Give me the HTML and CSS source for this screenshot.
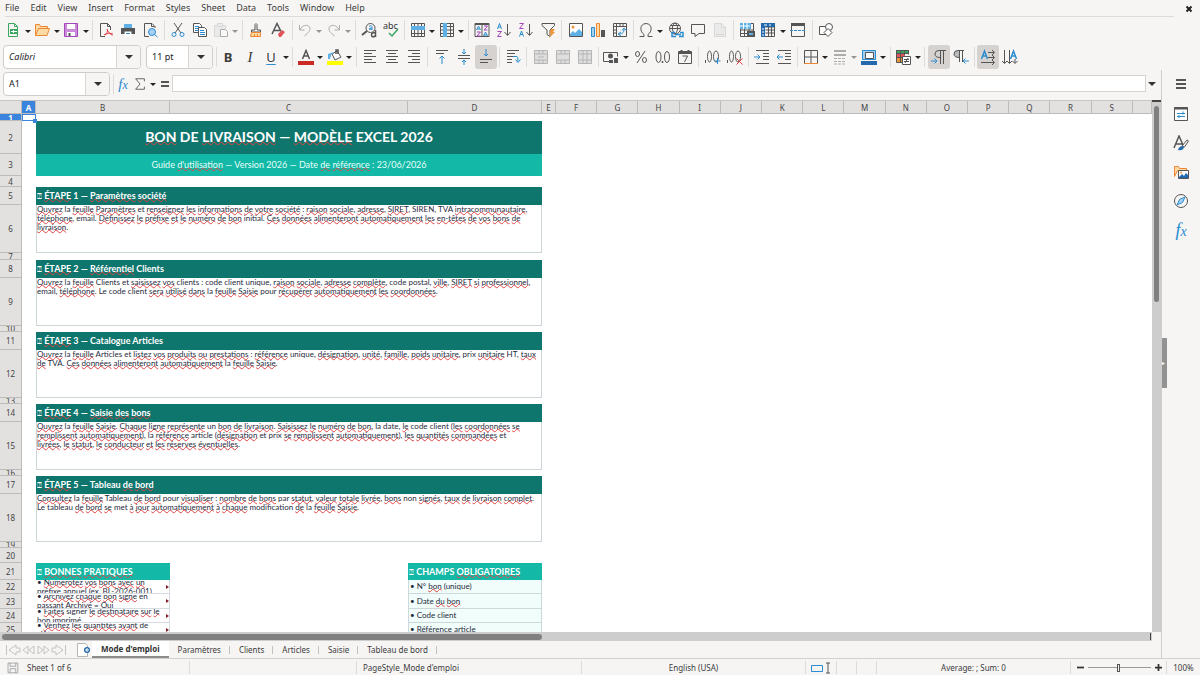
FILE: index.html
```html
<!DOCTYPE html>
<html lang="fr">
<head>
<meta charset="utf-8">
<title>Bon de livraison</title>
<link rel="stylesheet" href="styles.css">
</head>
<body>
<div class="app">
<header class="menubar">
  <nav class="menus">
    <button>File</button><button>Edit</button><button>View</button><button>Insert</button><button>Format</button><button>Styles</button><button>Sheet</button><button>Data</button><button>Tools</button><button>Window</button><button>Help</button>
  </nav>
  <button class="close" aria-label="Close"><svg viewBox="0 0 8 8"><path d="M1.500 1.500l5 5M6.500 1.500l-5 5"/></svg></button>
</header>

<div class="bar bar-main">
  <div class="tools standard">
    <div class="group">
      <button class="split" aria-label="New"><svg viewBox="0 0 16 16"><path class="green" d="M3.500 1.500h6l3 3v10h-9z"/><path class="green" d="M9.500 1.500v3h3"/><path class="fgreen" d="M5 7h8v5H5z"/><path class="white" d="M6 9.500h6M8.500 8v3"/></svg></button><button class="drop" aria-label="New options"></button>
      <button class="split" aria-label="Open"><svg viewBox="0 0 16 16"><path class="orange lightorange" d="M1.500 13.500v-11h4l1 2h7v3"/><path class="orange lightorange" d="M1.500 13.500l3-7h11l-2.500 7z"/></svg></button><button class="drop" aria-label="Open options"></button>
      <button class="split" aria-label="Save"><svg viewBox="0 0 16 16"><path class="purple fpurple" d="M1.500 1.500h13v13h-13z"/><path class="fwhite" d="M4 2h8v5H4zM4 10h8v4H4z"/><path class="fdark" d="M5.500 11h2v3h-2z"/></svg></button><button class="drop" aria-label="Save options"></button>
    </div>
    <i class="sep"></i>
    <div class="group">
      <button aria-label="Export PDF"><svg viewBox="0 0 16 16"><path d="M7 14.500H2.500v-13h7l3 3V8M9.500 1.500v3h3"/><path class="red" d="M6 13c3-1 4-4 3.500-5.500S8 9 14.500 13.500M7 13c2-2 5-2 8-1"/></svg></button>
      <button aria-label="Print"><svg viewBox="0 0 16 16"><path class="fblue" d="M4 2h8v4H4z"/><path class="fdark" d="M1 6h14v6H1z"/><path class="fwhite" d="M4.500 9.500h7v5h-7z"/><path class="blue" d="M6 11.500h4"/></svg></button>
      <button aria-label="Print preview"><svg viewBox="0 0 16 16"><path d="M13 6V4.500l-3-3H2.500v13H7M9.500 1.500v3h3"/><circle class="blue lightblue" cx="10" cy="10" r="3.500"/><path class="blue" d="M12.500 12.500l3 2.500"/></svg></button>
    </div>
    <i class="sep"></i>
    <div class="group">
      <button aria-label="Cut"><svg viewBox="0 0 16 16"><path d="M4 1l7 10M12 1L5 11"/><circle class="blue" cx="4" cy="12.500" r="2"/><circle class="blue" cx="12" cy="12.500" r="2"/></svg></button>
      <button aria-label="Copy"><svg viewBox="0 0 16 16"><path class="fwhite line" d="M1.500 1.500h6l2 2v7h-8z"/><path class="blue" d="M3 4.500h4M3 6.500h3M3 8.500h3"/><path class="fwhite line" d="M6.500 5.500h6l2 2v7h-8z"/><path class="blue" d="M8 8.500h4M8 10.500h5M8 12.500h5"/></svg></button>
      <button class="split off" aria-label="Paste"><svg viewBox="0 0 16 16"><path class="pale" d="M1.500 3.500h11v11h-11z"/><path class="pale" d="M4.500 1.500h5v3h-5z"/><path class="fwhite line" d="M7.500 7.500h5l2 2v5h-7z"/></svg></button><button class="drop off" aria-label="Paste options"></button>
    </div>
    <i class="sep"></i>
    <div class="group">
      <button aria-label="Clone formatting"><svg viewBox="0 0 16 16"><path d="M7 8V2.500q1-2 2 0V8h3.500v2h-9V8z"/><path class="orange lightorange" d="M3.500 10.500h9v4h-10zM6.500 12v2M9.500 12v2"/></svg></button>
      <button aria-label="Clear formatting"><svg viewBox="0 0 16 16"><path class="medium" d="M2 12L7 1.500l4 8M4 8.500h6"/><path class="fred" d="M8 12l4-4 3 2-4 5H9z"/></svg></button>
    </div>
    <i class="sep"></i>
    <div class="group">
      <button class="split off" aria-label="Undo"><svg viewBox="0 0 16 16"><path d="M2.500 3v5h5M3 7.500C6 2 13 2 13 7c0 2-1 3-5.500 7"/></svg></button><button class="drop off" aria-label="Undo options"></button>
      <button class="split off" aria-label="Redo"><svg viewBox="0 0 16 16"><path d="M13.500 3v5h-5M13 7.500C10 2 3 2 3 7c0 2 1 3 5.500 7"/></svg></button><button class="drop off" aria-label="Redo options"></button>
    </div>
    <i class="sep"></i>
    <div class="group">
      <button aria-label="Find and replace"><svg viewBox="0 0 16 16"><circle cx="9.500" cy="6" r="4.500"/><path class="thick" d="M6 9l-5 4"/><path class="blue" d="M8 4.500q3-2 3 1v2.500M11 6q-3 0-3 1t3 0"/><path class="medium" d="M14.500 8v7M14.500 11q-4-1-4 2t4 1"/></svg></button>
      <button aria-label="Spelling"><svg viewBox="0 0 16 16"><text class="abc" x="0" y="7">abc</text><path class="green medium" d="M6 11l3 3 6-7"/></svg></button>
    </div>
    <i class="sep"></i>
    <div class="group">
      <button class="split" aria-label="Row"><svg viewBox="0 0 16 16"><path d="M1.500 1.500h13v13h-13zM1.500 11.500h13M4.500 1.500v13M8 1.500v13M11.500 1.500v13"/><path class="fblue" d="M1 4h14v4H1z"/></svg></button><button class="drop" aria-label="Row options"></button>
      <button class="split" aria-label="Column"><svg viewBox="0 0 16 16"><path d="M1.500 1.500h13v13h-13zM11.500 1.500v13M1.500 4.500h13M1.500 8h13M1.500 11.500h13"/><path class="fblue" d="M4 1h4v14H4z"/></svg></button><button class="drop" aria-label="Column options"></button>
    </div>
    <i class="sep"></i>
    <div class="group">
      <button aria-label="Sort"><svg viewBox="0 0 16 16"><path d="M1 1.500h14v13H1zM8 1.500v13"/><path class="thick" d="M1 2h14"/><path class="blue" d="M2.500 8l2-4 2 4M3 7h3M9.500 14l2-4 2 4M10 13h3"/><path class="purple" d="M3 10h3.500L3 14h3.500M10 4h3.500L10 8h3.500"/></svg></button>
      <button aria-label="Sort ascending"><svg viewBox="0 0 16 16"><path class="blue" d="M1.500 7l2-5.500 2 5.500M2 5h3"/><path class="purple" d="M1.500 9.500h4l-4 5h4"/><path d="M11.500 2v11M8.500 10l3 3.500 3-3.500"/></svg></button>
      <button aria-label="Sort descending"><svg viewBox="0 0 16 16"><path class="purple" d="M1.500 1.500h4l-4 5h4"/><path class="blue" d="M1.500 14.500l2-5.500 2 5.500M2 12.500h3"/><path d="M11.500 2v11M8.500 10l3 3.500 3-3.500"/></svg></button>
      <button aria-label="AutoFilter"><svg viewBox="0 0 16 16"><path d="M2 1.500h12.500v2L10 8v6.500l-3-2V8L2 3.500z"/><path class="forange" d="M11 7h4l-2 3h2l-6 6 2-5H9z"/></svg></button>
    </div>
    <i class="sep"></i>
    <div class="group">
      <button aria-label="Image"><svg viewBox="0 0 16 16"><path class="fwhite line" d="M1.500 1.500h13v13h-13z"/><circle class="forange" cx="5" cy="5" r="1.500"/><path class="fblue" d="M2 12l3-3 2 2 4-4 3 3v4H2z"/></svg></button>
      <button aria-label="Chart"><svg viewBox="0 0 16 16"><path class="blue lightblue" d="M1.500 5.500h3v9h-3z"/><path class="orange lightorange" d="M6.500 1.500h3v13h-3z"/><path class="fdark" d="M11 8h4v7h-4z"/></svg></button>
      <button aria-label="Pivot table"><svg viewBox="0 0 16 16"><path d="M1.500 1.500h13v13h-13zM1.500 4.500h13M4.500 1.500v13M8 1.500v3M11 1.500v3M1.500 8h3M1.500 11h3"/><path class="blue" d="M7 12c4 0 5-2 5-5M10 8.500L12 6l2 2.500M9 10l-3 2 3 2"/></svg></button>
    </div>
    <i class="sep"></i>
    <div class="group">
      <button class="split" aria-label="Special character"><svg viewBox="0 0 16 16"><path d="M1.500 14.500h4.500v-2C2 10 1 2 8 1.500c7 .5 6 8.500 2 11v2h4.500"/></svg></button><button class="drop" aria-label="Character options"></button>
      <button aria-label="Hyperlink"><svg viewBox="0 0 16 16"><circle cx="7" cy="6.500" r="5.500"/><path d="M1.500 6.500h11M2.500 3.500h9M7 1c-4 3-3 8 0 11M7 1c4 3 3 8 0 11"/><path class="blue medium" d="M7 10.500H4v4h4M12 10.500h3v4h-4M7 12.500h6"/></svg></button>
      <button aria-label="Comment"><svg viewBox="0 0 16 16"><path d="M1.500 2.500h13v9H9l-4 3v-3H1.500z"/></svg></button>
      <button class="off" aria-label="Headers and footers"><svg viewBox="0 0 16 16"><path class="pale" d="M2.500 1.500h7l4 4v9h-11zM9.500 1.500v4h4M4 12.500h8"/></svg></button>
    </div>
    <i class="sep"></i>
    <div class="group">
      <button aria-label="Print area"><svg viewBox="0 0 16 16"><path d="M1.500 1.500h13v13h-13zM1.500 11.500h13M5.500 1.500v13M10 1.500v13M1.500 8h13"/><path class="fblue" d="M1 1h11v6H1z"/><path class="white" d="M1 4h10M4.500 1v6M8 1v6"/><path class="fdark" d="M8 9h8v6H8z"/><path class="fblue" d="M10 11h4v2h-4z"/></svg></button>
      <button class="split" aria-label="Freeze"><svg viewBox="0 0 16 16"><path d="M1.500 1.500h13v13h-13zM5.500 5h9M5.500 8h9M5.500 11h9M8.500 4v11M11.500 4v11"/><path class="fdeep" d="M1 1h14v4H5v10H1z"/><path class="white" d="M2 7h2M2 10h2M2 13h2M4 3h3M9 3h2"/></svg></button><button class="drop" aria-label="Freeze options"></button>
      <button aria-label="Split window"><svg viewBox="0 0 16 16"><path d="M1.500 1.500h13v13h-13z"/><path class="fdark" d="M1 1h14v3H1z"/><path class="blue dash" d="M0 8.500h16"/></svg></button>
    </div>
    <i class="sep"></i>
    <div class="group">
      <button aria-label="Draw functions"><svg viewBox="0 0 16 16"><path class="fwhite line" d="M1.500 4.500h8v8h-8z"/><circle class="fwhite line" cx="11" cy="5" r="3.500"/><path class="fwhite line" d="M10 6.500l4 4-4 4-4-4z"/></svg></button>
    </div>
  </div>
</div>

<div class="bar bar-format">
  <div class="combo font"><input type="text" value="Calibri" aria-label="Font name"><button aria-label="Font list"></button></div>
  <div class="combo size"><input type="text" value="11 pt" aria-label="Font size"><button aria-label="Size list"></button></div>
  <i class="sep"></i>
  <div class="tools formatting">
    <div class="group">
      <button class="glyph strong">B</button><button class="glyph ital">I</button><button class="glyph under split">U</button><button class="drop" aria-label="Underline options"></button>
    </div>
    <i class="sep"></i>
    <div class="group">
      <button class="split" aria-label="Font color"><svg viewBox="0 0 16 16"><path class="medium" d="M4.500 10L8 1.500 11.500 10M5.500 7h5"/><path class="fstrong" d="M0 12h16v4H0z"/></svg></button><button class="drop" aria-label="Font color options"></button>
      <button class="split" aria-label="Highlighting"><svg viewBox="0 0 16 16"><path class="fwhite line" d="M5 5l5-3 4 6-6 3z"/><path class="medium" d="M9 5V1h2v4"/><path class="fblue" d="M1 10V5l6-2-3 3-1 4z"/><path class="fyellow" d="M0 12h16v4H0z"/></svg></button><button class="drop" aria-label="Highlighting options"></button>
    </div>
    <i class="sep"></i>
    <div class="group">
      <button aria-label="Align left"><svg viewBox="0 0 16 16"><path d="M2 1.500h12M2 4.500h8M2 7.500h12M2 10.500h8M2 13.500h12"/></svg></button>
      <button aria-label="Center"><svg viewBox="0 0 16 16"><path d="M2 1.500h12M4 4.500h8M2 7.500h12M4 10.500h8M2 13.500h12"/></svg></button>
      <button aria-label="Align right"><svg viewBox="0 0 16 16"><path d="M2 1.500h12M6 4.500h8M2 7.500h12M6 10.500h8M2 13.500h12"/></svg></button>
    </div>
    <i class="sep"></i>
    <div class="group">
      <button aria-label="Align top"><svg viewBox="0 0 16 16"><path d="M2 1.500h12M2 4.500h8"/><path class="blue" d="M8 15V7M5.500 9.500L8 7l2.500 2.500"/></svg></button>
      <button aria-label="Center vertically"><svg viewBox="0 0 16 16"><path d="M2 6.500h12M2 9.500h12"/><path class="blue" d="M8 0v5M6 3l2 2 2-2M8 16v-5M6 13l2-2 2 2"/></svg></button>
      <button class="on" aria-label="Align bottom"><svg viewBox="0 0 16 16"><path d="M2 10.500h12M2 13.500h8"/><path class="blue" d="M8 0v7M6 5l2 2 2-2"/></svg></button>
    </div>
    <i class="sep"></i>
    <div class="group">
      <button aria-label="Wrap text"><svg viewBox="0 0 16 16"><path d="M2 1.500h12M2 4.500h8M2 7.500h6M2 10.500h5M2 13.500h5"/><path class="blue" d="M8 7.500h4q1 0 1 5M10.500 10.500l2.500 3 2.500-3"/></svg></button>
    </div>
    <i class="sep"></i>
    <div class="group">
      <button aria-label="Merge and center"><svg viewBox="0 0 16 16"><path class="pale" d="M1.500 1.500h13v13h-13zM1.500 5h13M1.500 11h13M6 1.500V5M10 1.500V5M6 11v3.500M10 11v3.500M5 8h6"/></svg></button>
      <button aria-label="Merge cells"><svg viewBox="0 0 16 16"><path class="pale" d="M1.500 1.500h13v13h-13zM1.500 5h13M1.500 11h13M6 1.500V5M10 1.500V5M6 11v3.500M10 11v3.500"/></svg></button>
      <button aria-label="Split cells"><svg viewBox="0 0 16 16"><path class="pale" d="M1.500 1.500h13v13h-13zM1.500 5h13M1.500 11h13M6 1.500v13M10 1.500v13"/></svg></button>
    </div>
    <i class="sep"></i>
    <div class="group">
      <button class="split" aria-label="Currency"><svg viewBox="0 0 16 16"><path d="M6 12.500H.5v-9h14v4"/><circle class="fdark" cx="7.500" cy="7" r="2.500"/><path class="fdark" d="M6 11h4v3H6zM11 9h4v5h-4z"/></svg></button><button class="drop" aria-label="Currency options"></button>
      <button aria-label="Percent"><svg viewBox="0 0 16 16"><ellipse cx="4.500" cy="5" rx="2" ry="2.500"/><ellipse cx="11.500" cy="11" rx="2" ry="2.500"/><path d="M12 2L4 14"/></svg></button>
      <button aria-label="Number"><svg viewBox="0 0 16 16"><ellipse cx="3.500" cy="8" rx="2.500" ry="5.500"/><ellipse cx="12" cy="8" rx="2.500" ry="5.500"/><path class="medium" d="M7.500 12v2"/></svg></button>
      <button aria-label="Date"><svg viewBox="0 0 16 16"><path d="M1.500 2.500h13v12h-13zM5.500 7h5l-3 6"/><path class="thick" d="M1 4h14M4.500 1v3M11.500 1v3"/></svg></button>
    </div>
    <i class="sep"></i>
    <div class="group">
      <button aria-label="Add decimal place"><svg viewBox="0 0 16 16"><ellipse cx="4.500" cy="7.500" rx="2" ry="5.500"/><ellipse cx="11" cy="7.500" rx="2.500" ry="5.500"/><path d="M.5 11v3"/><path class="blue" d="M12.500 9v6M9.500 12h6"/></svg></button>
      <button aria-label="Delete decimal place"><svg viewBox="0 0 16 16"><ellipse cx="4.500" cy="7.500" rx="2" ry="5.500"/><ellipse cx="11" cy="7.500" rx="2.500" ry="5.500"/><path d="M.5 11v3"/><path class="red" d="M9.500 9.500l6 6M15.500 9.500l-6 6"/></svg></button>
    </div>
    <i class="sep"></i>
    <div class="group">
      <button aria-label="Increase indent"><svg viewBox="0 0 16 16"><path d="M2 1.500h13M9 4.500h6M9 7.500h6M9 10.500h6M2 14.500h13"/><path class="blue" d="M0 8h6M3.500 5.500L6 8l-2.500 2.500"/></svg></button>
      <button aria-label="Decrease indent"><svg viewBox="0 0 16 16"><path d="M2 1.500h13M9 4.500h6M9 7.500h6M9 10.500h6M2 14.500h13"/><path class="blue" d="M7 8H1M3.500 5.500L1 8l2.500 2.500"/></svg></button>
    </div>
    <i class="sep"></i>
    <div class="group">
      <button class="split" aria-label="Borders"><svg viewBox="0 0 16 16"><path d="M1.500 14V1.500h13V14M8 1.500V14M1.500 8h13"/><path class="orange" d="M1 14.500h14"/></svg></button><button class="drop" aria-label="Border options"></button>
      <button class="split off" aria-label="Border style"><svg viewBox="0 0 16 16"><path class="thick" d="M2 2h12M2 6h12"/><path class="dash" d="M2 9.500h12M2 12.500h12M2 15h12"/></svg></button><button class="drop off" aria-label="Style options"></button>
      <button class="split" aria-label="Border color"><svg viewBox="0 0 16 16"><path class="blue lightblue" d="M1.500 1.500h13v9h-13z"/><path class="fwhite line" d="M4.500 3.500h8v6h-8z"/><path class="fdeep" d="M0 12h16v4H0z"/></svg></button><button class="drop" aria-label="Color options"></button>
    </div>
    <i class="sep"></i>
    <div class="group">
      <button class="split" aria-label="Conditional"><svg viewBox="0 0 16 16"><path class="fgreen" d="M1 1h13v3H1z"/><path class="fred" d="M1 5h9v3H1z"/><path class="forange" d="M1 9h6v4H1z"/><path d="M1.500 1.500h12v4M1.500 1.500v12H7M1.500 4.500h12M1.500 8.500h6M5.500 1.500v12M9.500 1.500V6"/><path class="fwhite line" d="M7.500 7.500h8v8h-8zM9 10.500h5M9 12.500h5M10 14l3-5"/></svg></button><button class="drop" aria-label="Conditional options"></button>
    </div>
    <i class="sep"></i>
    <div class="group">
      <button class="on" aria-label="Left to right"><svg viewBox="0 0 16 16"><path d="M9.500 1.500V15M12.500 1.500V15M15 1.500H8q-4 0-4 3.500t5 3.500"/><path class="blue" d="M0 12h6M3.500 9.500L6 12l-2.500 2.500"/></svg></button>
      <button aria-label="Right to left"><svg viewBox="0 0 16 16"><path class="fgray line" d="M6.500 1.500H5q-4 0-4 3.500t5.500 3.500z"/><path d="M6.500 1.500V13M9.500 1.500V13M11 1.500H5"/><path class="blue" d="M16 12h-6M12.500 9.500L10 12l2.500 2.500"/></svg></button>
    </div>
    <i class="sep"></i>
    <div class="group">
      <button class="on" aria-label="Text left to right"><svg viewBox="0 0 16 16"><path class="blue medium" d="M1.500 10l3-8 3 8M3 7h4"/><path d="M8 3.500h6M12 1l2.500 2.500L12 6M8 8.500h6M12 6l2.500 2.500L12 11M1 13.500h13M12 11l2.500 2.500L12 16"/></svg></button>
      <button aria-label="Text top to bottom"><svg viewBox="0 0 16 16"><path class="blue medium" d="M8.500 10l3-8 3 8M10 7h4"/><path d="M2.500 1v13M0 12l2.500 2.500L5 12M7.500 1v13M5 12l2.500 2.500L10 12M13 10v4M10.500 12l2.500 2.500 2.500-2.500"/></svg></button>
    </div>
  </div>
</div>

<div class="workspace">
<main class="main">
  <div class="formula">
    <div class="combo name"><input type="text" value="A1" aria-label="Name box"><button aria-label="Names"></button></div>
    <i class="sep"></i>
    <button class="fx" aria-label="Function wizard"><i>f</i><i class="x">x</i></button>
    <button class="sigma" aria-label="Sum"><svg viewBox="0 0 16 16"><path d="M13 5V2H3l5 6-5 6h10v-3"/></svg></button><button class="drop" aria-label="Sum options"></button>
    <button class="equal" aria-label="Formula"><svg viewBox="0 0 10 10"><path class="thick" d="M1 3h8M1 7h8"/></svg></button>
    <input class="entry" type="text" aria-label="Formula input">
    <button class="expand" aria-label="Expand formula bar"></button>
  </div>
  <div class="sheet-area">
    <div class="sheet">
      <table class="grid">
        <colgroup><col class="c-head"><col class="c-thin"><col class="c-b"><col class="c-c"><col class="c-d"><col class="c-thin"><col span="14"><col class="c-last"></colgroup>
        <thead><tr><th></th><th class="sel">A</th><th>B</th><th>C</th><th>D</th><th>E</th><th>F</th><th>G</th><th>H</th><th>I</th><th>J</th><th>K</th><th>L</th><th>M</th><th>N</th><th>O</th><th>P</th><th>Q</th><th>R</th><th>S</th><th></th></tr></thead>
        <tbody>
        <tr class="h7"><th class="sel"><div>1</div></th><td class="active"><span class="handle"></span></td><td colspan="19"></td></tr>
        <tr class="h33"><th>2</th><td></td><td class="title" colspan="3"><u>BON</u> DE <u>LIVRAISON</u> — <u>MODÈLE</u> EXCEL 2026</td><td colspan="16"></td></tr>
        <tr class="h22"><th>3</th><td></td><td class="subtitle" colspan="3">Guide <u>d'utilisation</u> — Version 2026 — Date <u>de</u> <u>référence</u> : 23/06/2026</td><td colspan="16"></td></tr>
        <tr class="h11"><th><div>4</div></th><td colspan="20"></td></tr>
        <tr class="h18"><th>5</th><td></td><td class="step" colspan="3"><b>⍰</b> <u>ÉTAPE</u> 1 — <u>Paramètres</u> <u>société</u></td><td colspan="16"></td></tr>
        <tr class="h48"><th>6</th><td></td><td class="note" colspan="3"><u>Ouvrez</u> la <u>feuille</u> <u>Paramètres</u> et <u>renseignez</u> <u>les</u> <u>informations</u> <u>de</u> <u>votre</u> <u>société</u> : <u>raison</u> <u>sociale</u>, <u>adresse</u>, <u>SIRET</u>, SIREN, TVA <u>intracommunautaire</u>,<br><u>téléphone</u>, email. <u>Définissez</u> <u>le</u> <u>préfixe</u> <u>et</u> <u>le</u> <u>numéro</u> <u>de</u> <u>bon</u> initial. <u>Ces</u> <u>données</u> <u>alimenteront</u> <u>automatiquement</u> <u>les</u> <u>en-têtes</u> <u>de</u> <u>vos</u> <u>bons</u> <u>de</u><br><u>livraison</u>.</td><td colspan="16"></td></tr>
        <tr class="h7"><th><div>7</div></th><td colspan="20"></td></tr>
        <tr class="h18"><th>8</th><td></td><td class="step" colspan="3"><b>⍰</b> <u>ÉTAPE</u> 2 — <u>Référentiel</u> Clients</td><td colspan="16"></td></tr>
        <tr class="h48"><th>9</th><td></td><td class="note" colspan="3"><u>Ouvrez</u> la <u>feuille</u> Clients et <u>saisissez</u> <u>vos</u> clients : code client unique, <u>raison</u> <u>sociale</u>, <u>adresse</u> <u>complète</u>, code postal, <u>ville</u>, <u>SIRET</u> <u>si</u> <u>professionnel</u>,<br>email, <u>téléphone</u>. Le code client <u>sera</u> <u>utilisé</u> <u>dans</u> la <u>feuille</u> <u>Saisie</u> pour <u>récupérer</u> <u>automatiquement</u> <u>les</u> <u>coordonnées</u>.</td><td colspan="16"></td></tr>
        <tr class="h6"><th><div>10</div></th><td colspan="20"></td></tr>
        <tr class="h18"><th>11</th><td></td><td class="step" colspan="3"><b>⍰</b> <u>ÉTAPE</u> 3 — Catalogue Articles</td><td colspan="16"></td></tr>
        <tr class="h48"><th>12</th><td></td><td class="note" colspan="3"><u>Ouvrez</u> la <u>feuille</u> Articles et <u>listez</u> <u>vos</u> <u>produits</u> <u>ou</u> <u>prestations</u> : <u>référence</u> unique, <u>désignation</u>, <u>unité</u>, <u>famille</u>, <u>poids</u> <u>unitaire</u>, prix <u>unitaire</u> HT, <u>taux</u><br><u>de</u> TVA. <u>Ces</u> <u>données</u> <u>alimenteront</u> <u>automatiquement</u> la <u>feuille</u> <u>Saisie</u>.</td><td colspan="16"></td></tr>
        <tr class="h6"><th><div>13</div></th><td colspan="20"></td></tr>
        <tr class="h18"><th>14</th><td></td><td class="step" colspan="3"><b>⍰</b> <u>ÉTAPE</u> 4 — <u>Saisie</u> <u>des</u> <u>bons</u></td><td colspan="16"></td></tr>
        <tr class="h48"><th>15</th><td></td><td class="note" colspan="3"><u>Ouvrez</u> la <u>feuille</u> <u>Saisie</u>. <u>Chaque</u> <u>ligne</u> <u>représente</u> un <u>bon</u> <u>de</u> <u>livraison</u>. <u>Saisissez</u> <u>le</u> <u>numéro</u> <u>de</u> <u>bon</u>, la date, <u>le</u> code client (<u>les</u> <u>coordonnées</u> <u>se</u><br><u>remplissent</u> <u>automatiquement</u>), la <u>référence</u> article (<u>désignation</u> et prix <u>se</u> <u>remplissent</u> <u>automatiquement</u>), <u>les</u> <u>quantités</u> <u>commandées</u> et<br><u>livrées</u>, <u>le</u> <u>statut</u>, <u>le</u> <u>conducteur</u> <u>et</u> <u>les</u> <u>réserves</u> <u>éventuelles</u>.</td><td colspan="16"></td></tr>
        <tr class="h6"><th><div>16</div></th><td colspan="20"></td></tr>
        <tr class="h18"><th>17</th><td></td><td class="step" colspan="3"><b>⍰</b> <u>ÉTAPE</u> 5 — Tableau <u>de</u> <u>bord</u></td><td colspan="16"></td></tr>
        <tr class="h48"><th>18</th><td></td><td class="note" colspan="3"><u>Consultez</u> la <u>feuille</u> Tableau <u>de</u> <u>bord</u> pour <u>visualiser</u> : <u>nombre</u> <u>de</u> <u>bons</u> par <u>statut</u>, <u>valeur</u> <u>totale</u> <u>livrée</u>, <u>bons</u> non <u>signés</u>, <u>taux</u> <u>de</u> <u>livraison</u> <u>complet</u>.<br>Le tableau <u>de</u> <u>bord</u> <u>se</u> met <u>à</u> <u>jour</u> <u>automatiquement</u> <u>à</u> <u>chaque</u> modification <u>de</u> la <u>feuille</u> <u>Saisie</u>.</td><td colspan="16"></td></tr>
        <tr class="h6"><th><div>19</div></th><td colspan="20"></td></tr>
        <tr class="h15"><th>20</th><td colspan="20"></td></tr>
        <tr class="h17"><th>21</th><td></td><td class="list-head"><b>⍰</b> <u>BONNES</u> <u>PRATIQUES</u></td><td></td><td class="list-head"><b>⍰</b> CHAMPS <u>OBLIGATOIRES</u></td><td colspan="16"></td></tr>
        <tr class="h14"><th>22</th><td></td><td class="tip"><div><span>• <u>Numérotez</u> <u>vos</u> <u>bons</u> <u>avec</u> <u>un</u><br><u>préfixe</u> <u>annuel</u> (ex. BL-2026-001)</span></div></td><td></td><td class="field">• N° <u>bon</u> (unique)</td><td colspan="16"></td></tr>
        <tr class="h15"><th>23</th><td></td><td class="tip"><div><span>• <u>Archivez</u> <u>chaque</u> <u>bon</u> <u>signé</u> en<br><u>passant</u> <u>Archivé</u> = <u>Oui</u></span></div></td><td></td><td class="field">• Date <u>du</u> <u>bon</u></td><td colspan="16"></td></tr>
        <tr class="h14"><th>24</th><td></td><td class="tip"><div><span>• <u>Faites</u> signer <u>le</u> <u>destinataire</u> <u>sur</u> <u>le</u><br><u>bon</u> <u>imprimé</u></span></div></td><td></td><td class="field">• Code client</td><td colspan="16"></td></tr>
        <tr class="h14"><th>25</th><td></td><td class="tip"><div><span>• <u>Vérifiez</u> <u>les</u> <u>quantités</u> <u>avant</u> de<br><u>clôturer</u> <u>le</u> <u>bon</u></span></div></td><td></td><td class="field">• Référence article</td><td colspan="16"></td></tr>
        </tbody>
      </table>
    </div>
    <div class="vscroll"><span class="thumb"></span></div>
  </div>
  <div class="hscroll"><span class="thumb"></span><span class="splitter"></span></div>
  <nav class="tabs">
    <svg class="arrows" viewBox="0 0 62 12"><path d="M1.500 1v10M11 1L4 6l7 5V8h4V4h-4zM23 2l-5 4 5 4zM29 2l-5 4 5 4zM33 2l5 4-5 4zM39 2l5 4-5 4zM51 1l7 5-7 5V8h-4V4h4zM60.500 1v10"/></svg>
    <button class="add" aria-label="Add sheet"><svg viewBox="0 0 16 16"><path class="fwhite pale" d="M2.500 1.500h8l2 2v11h-10z"/><circle class="fdeep" cx="12" cy="8" r="3"/><path class="white" d="M12 6v4M10 8h4"/></svg></button>
    <button class="tab current">Mode d'emploi</button><button class="tab">Paramètres</button><button class="tab">Clients</button><button class="tab">Articles</button><button class="tab">Saisie</button><button class="tab">Tableau de bord</button>
  </nav>
</main>
<aside class="sidebar">
  <button aria-label="Sidebar settings"><svg viewBox="0 0 16 16"><path class="thick" d="M3 4h10M3 8h10M3 12h10"/></svg></button>
  <button aria-label="Properties"><svg viewBox="0 0 16 16"><path class="fwhite line" d="M1.500 1.500h13v13h-13z"/><path class="thick" d="M1 2.500h14"/><path class="blue" d="M4 7.500h8M4 10.500h8M10 5.500v3M6 9v3"/></svg></button>
  <button aria-label="Styles"><svg viewBox="0 0 16 16"><path class="medium" d="M1 13L6 1l4 9M3 9h6"/><path d="M9 11l5-6 1.500 1-4 6z"/><path class="fdeep" d="M5 15q1-4 5-4l1 2q-2 3-6 2z"/></svg></button>
  <button aria-label="Gallery"><svg viewBox="0 0 16 16"><path class="orange lightorange" d="M1.500 12.500v-10h4l1 2h7v2h-9z"/><path class="fwhite line" d="M5.500 6.500h10v8h-10z"/><path class="fdeep" d="M6 13l3-3 2 2 2-3 2 2v3H6z"/><circle class="forange" cx="8" cy="8.500" r="1"/></svg></button>
  <button aria-label="Navigator"><svg viewBox="0 0 16 16"><circle cx="8" cy="8" r="6.500"/><path class="blue lightblue" d="M12 4L9.500 9.500 4 12l2.500-5.500z"/></svg></button>
  <button class="fx" aria-label="Functions"><i>f</i><i class="x">x</i></button>
  <span class="grip">▸</span>
</aside>
</div>

<footer class="status">
  <span class="doc"><svg viewBox="0 0 16 16"><path d="M2.500 2.500h12v12h-12zM5 2.500v4h7v-4M5 14.500v-5h7v5"/></svg>Sheet 1 of 6</span><span></span>
  <span class="page">PageStyle_Mode d'emploi</span><span class="mid">English (USA)</span>
  <span class="mid"><svg class="mode" viewBox="0 0 20 12"><path class="blue" d="M.5 3.500h11v6H.5z"/><path d="M15 1h4M17 1v10M15 11h4"/></svg></span><span></span><span></span><span class="mid">Average: ; Sum: 0</span>
  <span class="zoom"><button aria-label="Zoom out"><svg viewBox="0 0 8 8"><path class="thick" d="M0 4h8"/></svg></button><input type="range" min="0" max="100" value="49" aria-label="Zoom"><button aria-label="Zoom in"><svg viewBox="0 0 8 8"><path class="thick" d="M0 4h8M4 0v8"/></svg></button></span><span class="mid">100%</span>
</footer>
</div>
</body>
</html>
```

FILE: styles.css
```css
* { box-sizing: border-box; }
body { margin: 0; background: #f6f5f4; color: #3c3c3c; font: 9px/12px "Noto Sans", "Open Sans", sans-serif; }
button, input { font: inherit; color: inherit; margin: 0; padding: 0; border: 0; background: none; }
button { display: flex; align-items: center; justify-content: center; flex: none; }
.app { display: flex; flex-direction: column; height: 100vh; overflow: hidden; }

svg { width: 16px; height: 16px; flex: none; fill: none; stroke: #555; stroke-width: 1; }
.medium { stroke-width: 1.5; }
.thick { stroke-width: 2; }
.blue { stroke: #2b8dd0; }
.green { stroke: #3aa660; }
.orange { stroke: #ed8733; }
.purple { stroke: #a347ba; }
.red { stroke: #e03e42; }
.white { stroke: #fff; }
.pale { stroke: #b5b5b5; fill: #dedede; }
.dash { stroke-dasharray: 3 1; }
.lightblue { fill: #a5d0f0; }
.lightorange { fill: #fbdaa3; }
.fgreen { fill: #3aa660; stroke: none; }
.fblue { fill: #5fb0e5; stroke: none; }
.fdeep { fill: #2468ad; stroke: none; }
.fred { fill: #e2555a; stroke: none; }
.fstrong { fill: #cb2a22; stroke: none; }
.fyellow { fill: #ff0; stroke: none; }
.forange { fill: #ee963e; stroke: none; }
.fpurple { fill: #c98bda; }
.fdark { fill: #555; stroke: none; }
.fgray { fill: #b9b9b9; }
.fwhite { fill: #fdfdfd; stroke: none; }
.line { stroke: #555; }
.fwhite.pale { fill: #fff; stroke: #b5b5b5; }
.abc { font: 9px "Noto Sans", sans-serif; fill: #333; stroke: none; }

.menubar { display: flex; justify-content: space-between; height: 17px; flex: none; padding: 0 6px 0 5px; }
.menus { display: flex; gap: 11px; flex: 1; border-bottom: 1px solid #dddbd9; margin-right: 10px; }
.close { width: 10px; }
.close svg { width: 8px; height: 8px; stroke: #222; stroke-width: 2; }

.bar { display: flex; align-items: center; flex: none; height: 27px; padding-left: 3px; }
.tools { display: flex; align-items: center; justify-content: space-between; width: 100%; }
.standard { max-width: 834px; }
.formatting { max-width: 804px; }
.group { display: flex; }
.group button { width: 22px; height: 24px; border-radius: 3px; }
.group .split { width: 20px; }
.group .drop, .drop { width: 9px; }
.drop::before { content: ""; border: 3px solid transparent; border-top: 3px solid #222; border-bottom: 0; margin-top: 2px; }
.off { opacity: .45; }
.group .on { background: #d5d2cf; }
.sep { width: 1px; height: 20px; background: #dedcda; flex: none; }
.glyph { font-size: 13px; }
.strong { font-weight: 700; }
.ital { font-family: "Liberation Serif", serif; font-style: italic; font-size: 15px; }
.under { text-decoration: underline #2b8dd0; text-underline-offset: 2px; }

.combo { display: flex; height: 24px; border: 1px solid #cfccc9; border-radius: 4px; background: #fff; overflow: hidden; flex: none; }
.combo input { flex: 1; min-width: 0; padding-left: 5px; font-size: 9px; color: #222; }
.combo button { width: 24px; border-left: 1px solid #d9d6d3; background: #f6f5f4; }
.combo button::before, .expand::before { content: ""; border: 4px solid transparent; border-top: 4px solid #333; border-bottom: 0; }
.font { width: 138px; margin-right: 5px; }
.font input { font-style: italic; }
.size { width: 67px; margin-right: 3px; }
.bar-main { height: 26px; }

.workspace { display: flex; flex: 1; min-height: 0; }
.main { flex: 1; min-width: 0; display: flex; flex-direction: column; border-right: 1px solid #cfcdcb; }
.formula { display: flex; align-items: center; height: 30px; flex: none; padding: 0 3px 3px; }
.name { width: 107px; margin-right: 3px; }
.formula .sigma { width: 16px; }
.sigma svg { width: 14px; height: 14px; }
.formula .equal { width: 13px; margin-left: 1px; }
.equal svg { width: 10px; height: 10px; }
.entry { flex: 1; min-width: 0; height: 17px; background: #fff; border: 1px solid #d6d3d0; margin-left: 1px; }
.expand { width: 12px; }
.fx { color: #1f88cf; width: 18px; font: 15px/16px "Liberation Serif", serif; }
.fx .x { font-size: 12px; padding-top: 3px; }

.sheet-area { flex: 1; min-height: 0; display: flex; }
.sheet { flex: 1; min-width: 0; overflow: hidden; background: #fff; }
.grid { width: 100%; table-layout: fixed; border-collapse: separate; border-spacing: 0; font-size: 8px; line-height: 9px; }
.c-head { width: 22px; }
.c-thin { width: 14px; }
.c-b, .c-d { width: 134px; }
.c-c { width: 238px; }
.c-last { width: 19px; }
.grid th, .grid td { padding: 0; }
.grid th { font-weight: 400; background: #e2e1e0; border-right: 1px solid #bebcba; border-bottom: 1px solid #bebcba; color: #444; }
.grid thead th { height: 14px; border-top: 1px solid #c8c6c4; }
.grid th.sel { background: #3a84de; color: #fff; font-weight: 700; }
.grid th div { display: flex; align-items: center; justify-content: center; overflow: hidden; }
.h6 { height: 6px; }
.h7 { height: 7px; }
.h6 div { height: 5px; }
.h7 div { height: 6px; }
.h11 { height: 11px; }
.h14 { height: 14px; }
.h15 { height: 15px; }
.h17 { height: 17px; }
.h18 { height: 18px; }
.h22 { height: 22px; }
.h33 { height: 33px; }
.h48 { height: 48px; }
.grid .active { position: relative; border: 1px solid #3a84de; }
.handle { position: absolute; right: -2px; bottom: -3px; width: 4px; height: 4px; background: #3a84de; }
.grid u { text-decoration: underline wavy #e04444 1px; text-underline-offset: -1px; text-decoration-skip-ink: none; }
.grid b { font-family: "DejaVu Sans", sans-serif; font-weight: 400; font-size: 8px; }
.title, .subtitle, .step, .list-head, .note, .tip, .field { font-family: Lato, sans-serif; }
.title { background: #0f766e; color: #fff; font-size: 14px; line-height: 18px; font-weight: 700; text-align: center; }
.subtitle { background: #14b8a6; color: #e6fffa; font-size: 9px; text-align: center; }
.grid .title, .grid .subtitle { padding-bottom: 2px; }
.step { background: #0f766e; color: #fff; font-size: 9px; font-weight: 700; }
.list-head { background: #14b8a6; color: #fff; font-size: 9px; font-weight: 700; }
.grid .step, .grid .list-head, .grid .field { padding-left: 1px; }
.grid .step { padding-bottom: 1px; }
.grid .note { border: 1px solid #ccd6d9; border-top: 0; vertical-align: top; white-space: nowrap; color: #1f2b3d; }
.grid .tip { border-right: 1px solid #d5dbe0; border-bottom: 1px solid #d5dbe0; position: relative; color: #1f2b3d; }
.tip div { height: 13px; display: flex; align-items: center; overflow: hidden; padding-left: 1px; white-space: nowrap; }
.tip::after { content: ""; position: absolute; right: 0; top: 5px; border: 2px solid transparent; border-left: 3px solid #8b1e2d; border-right: 0; }
.grid .field { background: #f0fdfa; border: 1px solid #ccd9d8; border-top: 0; color: #1f2b3d; }
.vscroll { width: 9px; background: #cdcdcd; border-top: 2px solid #444; }
.vscroll .thumb { display: block; margin: 4px 2px 0; height: 37%; background: #808080; border-radius: 3px; }
.hscroll { height: 9px; flex: none; display: flex; align-items: center; justify-content: space-between; background: #cdcdcd; padding: 0 1px 0 2px; margin-right: 9px; }
.hscroll .thumb { width: 47%; height: 6px; background: #808080; border-radius: 3px; }
.hscroll .splitter { width: 1px; height: 7px; background: #444; }

.tabs { display: flex; align-items: center; height: 17px; flex: none; padding-left: 5px; font-size: 8px; }
.arrows { width: 62px; height: 12px; stroke: #c5c3c1; margin-right: 6px; }
.add { width: 19px; height: 17px; }
.tab { height: 17px; padding: 0 9px; position: relative; }
.tab + .tab::after { content: ""; position: absolute; right: 0; top: 5px; height: 8px; border-right: 1px solid #c4c2c0; }
.tab.current { background: #fff; font-weight: 700; border-bottom: 2px solid #8c8c8c; color: #333; }

.sidebar { width: 38px; flex: none; display: flex; flex-direction: column; align-items: center; gap: 5px; padding-top: 2px; position: relative; }
.sidebar button { width: 24px; height: 24px; }
.sidebar button:first-child { margin-bottom: 1px; }
.sidebar .fx { font-size: 18px; }
.sidebar .fx .x { font-size: 14px; }
.grip { position: absolute; left: 0; top: 268px; width: 5px; height: 50px; background: #929292; color: #fff; font: 6px/50px "DejaVu Sans", sans-serif; }

.status { display: grid; grid-template-columns: 190fr 167fr 225fr 224fr 31fr 20fr 20fr 194fr 96fr 33fr; height: 17px; flex: none; border-top: 1px solid #d2d0ce; padding: 2px 0; font-size: 8px; }
.status > span { display: flex; align-items: center; border-right: 1px solid #dedcda; padding-left: 6px; white-space: nowrap; min-width: 0; }
.status > span:last-child { border: 0; }
.status > .mid { justify-content: center; padding: 0; }
.doc svg { width: 13px; height: 13px; margin-right: 8px; stroke: #999; }
.status .mode { width: 20px; height: 12px; }
.status .zoom { padding: 0 4px 0 6px; justify-content: space-between; }
.zoom svg { width: 7px; height: 7px; stroke: #333; }
.zoom input { flex: 1; min-width: 0; margin: 0 4px; height: 8px; appearance: none; background: linear-gradient(#999, #999) center / 100% 1px no-repeat; }
.zoom input::-webkit-slider-thumb { appearance: none; width: 3px; height: 8px; border: 1px solid #555; background: #eee; }
```
